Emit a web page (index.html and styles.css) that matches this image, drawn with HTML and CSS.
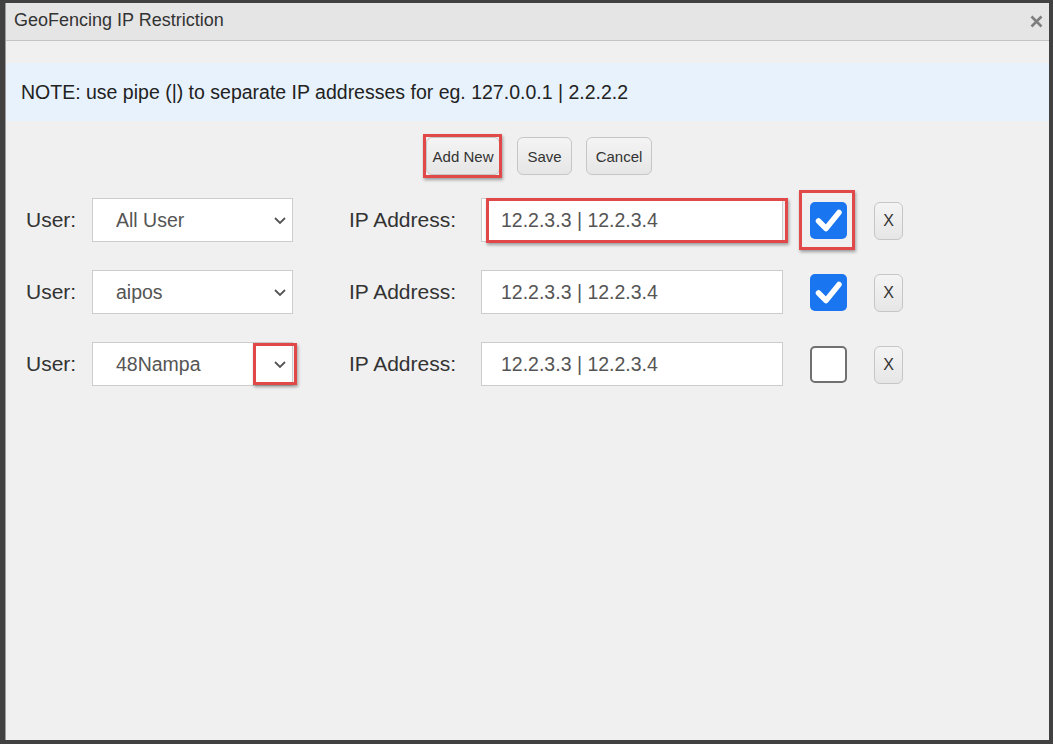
FILE: index.html
```html
<!DOCTYPE html>
<html lang="en">
<head>
<meta charset="UTF-8">
<title>GeoFencing IP Restriction</title>
<link rel="stylesheet" href="styles.css">
</head>
<body>
<div class="dlg">
  <div class="dlg-title">
    <span>GeoFencing IP Restriction</span>
    <button class="close" title="Close">
      <svg width="13" height="13" viewBox="0 0 13 13"><path d="M1.5 1.5L11.5 11.5M11.5 1.5L1.5 11.5" stroke="#7e7e7e" stroke-width="2.6"/></svg>
    </button>
  </div>

  <div class="note">NOTE: use pipe (|) to separate IP addresses for eg. 127.0.0.1 | 2.2.2.2</div>

  <div class="actions">
    <button class="btn add mark">Add New</button>
    <button class="btn">Save</button>
    <button class="btn">Cancel</button>
  </div>

  <div class="rows">
    <div class="row">
      <label class="lbl-user">User:</label>
      <div class="pick">
        <select><option>All User</option></select>
        <svg class="chev" width="12" height="7" viewBox="0 0 12 7"><path d="M1 1L6 6L11 1" fill="none" stroke="#555" stroke-width="1.8"/></svg>
      </div>
      <label class="lbl-ip">IP Address:</label>
      <div class="ip mark-ip"><input value="12.2.3.3 | 12.2.3.4"></div>
      <span class="tick on mark-tick">
        <svg width="37" height="37" viewBox="0 0 37 37"><path d="M8.5 19L16 26.5L29 10.5" fill="none" stroke="#fff" stroke-width="5.5" stroke-linecap="round" stroke-linejoin="round"/></svg>
      </span>
      <button class="btn del">X</button>
    </div>

    <div class="row">
      <label class="lbl-user">User:</label>
      <div class="pick">
        <select><option>aipos</option></select>
        <svg class="chev" width="12" height="7" viewBox="0 0 12 7"><path d="M1 1L6 6L11 1" fill="none" stroke="#555" stroke-width="1.8"/></svg>
      </div>
      <label class="lbl-ip">IP Address:</label>
      <div class="ip"><input value="12.2.3.3 | 12.2.3.4"></div>
      <span class="tick on">
        <svg width="37" height="37" viewBox="0 0 37 37"><path d="M8.5 19L16 26.5L29 10.5" fill="none" stroke="#fff" stroke-width="5.5" stroke-linecap="round" stroke-linejoin="round"/></svg>
      </span>
      <button class="btn del">X</button>
    </div>

    <div class="row">
      <label class="lbl-user">User:</label>
      <div class="pick mark-chev">
        <select><option>48Nampa</option></select>
        <svg class="chev" width="12" height="7" viewBox="0 0 12 7"><path d="M1 1L6 6L11 1" fill="none" stroke="#555" stroke-width="1.8"/></svg>
      </div>
      <label class="lbl-ip">IP Address:</label>
      <div class="ip"><input value="12.2.3.3 | 12.2.3.4"></div>
      <span class="tick"></span>
      <button class="btn del">X</button>
    </div>
  </div>
</div>
</body>
</html>
```

FILE: styles.css
```css
*{box-sizing:border-box;margin:0;padding:0}
body{background:#414141;font-family:"Liberation Sans", Arial, sans-serif;color:#333}
.dlg{margin:3px 4px 4px 5px;height:calc(100vh - 7px);background:#f0f0f0;border-left:1px solid #9c9c9c}
.dlg-title{height:38px;background:#e5e5e5;border-bottom:1px solid #c4c4c4;display:flex;justify-content:space-between;align-items:center;padding:0 6px 3px 8px;font-size:18px;color:#333}
.close{border:none;background:none;display:flex;margin-top:2px}
.note{margin-top:22px;height:58px;background:#e7f2fd;display:flex;align-items:center;padding-left:15px;font-size:19.5px;color:#222}
.actions{display:flex;justify-content:center;gap:14px;margin-top:16px;padding-left:23px}
.btn{height:38px;padding:0 9px;font-family:inherit;font-size:15px;color:#333;background:linear-gradient(#f4f4f4,#e6e6e6);border:1px solid #c6c6c6;border-radius:6px}
.btn.add{padding:0 6px;margin-right:3px}
.mark,.mark-ip,.mark-tick,.mark-chev{position:relative}
.mark::after,.mark-ip::after,.mark-tick::after,.mark-chev::after{content:"";position:absolute;border:3px solid #e0484a;box-shadow:1px 2px 3px rgba(0,0,0,.35);pointer-events:none}
.mark::after{left:-4px;right:-3px;top:-4px;bottom:-4px}
.mark-ip::after{left:5px;right:-5px;top:0;bottom:-1px}
.mark-tick::after{left:-11px;right:-8px;top:-12px;bottom:-11px}
.mark-chev::after{right:-4px;width:38px;top:1px;bottom:1px}
.rows{display:flex;flex-direction:column;gap:28px;margin-top:23px;padding-left:20px}
.row{display:flex;align-items:center;height:44px}
.lbl-user{width:66px;font-size:21px;color:#333}
.lbl-ip{width:132px;margin-left:56px;font-size:21px;color:#333}
.pick{position:relative;width:201px;height:44px}
.pick select{appearance:none;-webkit-appearance:none;width:100%;height:100%;border:1px solid #cdcdcd;background:#fff;padding-left:23px;font-family:inherit;font-size:19.5px;color:#555;border-radius:0;outline:none}
.pick .chev{position:absolute;right:7px;top:19px}
.ip{width:302px;height:44px}
.ip input{width:100%;height:100%;border:1px solid #cdcdcd;background:#fff;padding-left:19px;font-family:inherit;font-size:19.5px;color:#555;outline:none}
.tick{width:37px;height:37px;margin-left:27px;border:2px solid #707070;border-radius:5px;background:#fff;display:flex}
.tick.on{background:#1a75f0;border:none}
.del{width:29px;margin-left:27px;padding:0;font-size:16px;margin-top:2px}
```
